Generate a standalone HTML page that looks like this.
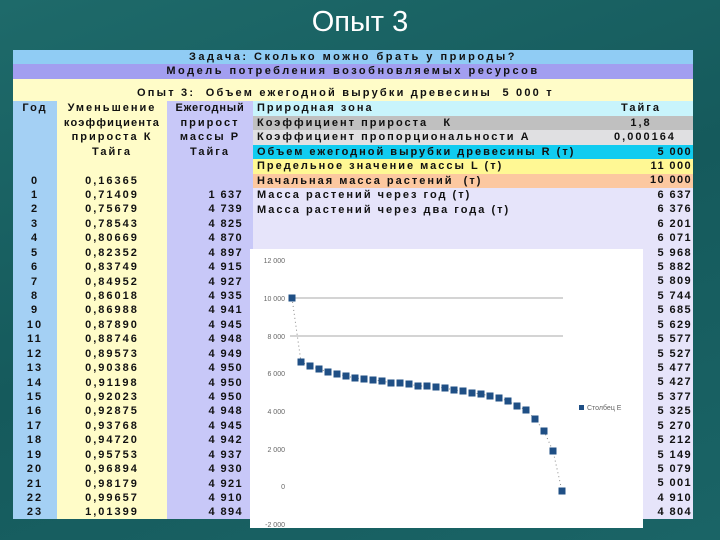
<!DOCTYPE html>
<html><head><meta charset="utf-8"><style>
*{margin:0;padding:0;box-sizing:border-box}
body{width:720px;height:540px;overflow:hidden;position:relative;background:linear-gradient(160deg,#1e6a6a 0%,#155a5c 50%,#1a6466 100%);font-family:"Liberation Sans",sans-serif}
.t{position:absolute;left:0;width:720px;text-align:center;top:6px;color:#fff;font-size:29px}
.b{position:absolute}
.r{position:absolute;height:14.5px;font-size:11px;font-weight:bold;letter-spacing:2px;line-height:14.5px;color:#111;white-space:nowrap}
.c{text-align:center}
.rt{text-align:right;letter-spacing:1.4px}
</style></head><body>
<div class="t">Опыт 3</div>
<div class="b" style="left:13px;top:50px;width:680px;height:14px;background:#90ccf4"></div>
<div class="b" style="left:13px;top:64px;width:680px;height:15px;background:#a29ef0"></div>
<div class="b" style="left:13px;top:79px;width:680px;height:22px;background:#fffcc8"></div>
<div class="b" style="left:13px;top:101px;width:44px;height:418px;background:#a4d0f4"></div>
<div class="b" style="left:57px;top:101px;width:110px;height:418px;background:#fffcc8"></div>
<div class="b" style="left:167px;top:101px;width:86px;height:418px;background:#c8c8f8"></div>
<div class="b" style="left:253px;top:101px;width:440px;height:418px;background:#e6e4fa"></div>
<div class="b" style="left:253px;top:101px;width:440px;height:14.5px;background:#c8f4fc"></div>
<div class="b" style="left:253px;top:115.5px;width:440px;height:14.5px;background:#c0c0c0"></div>
<div class="b" style="left:253px;top:130px;width:440px;height:14.5px;background:#e0e0e2"></div>
<div class="b" style="left:253px;top:144.5px;width:440px;height:14.5px;background:#10ccf0"></div>
<div class="b" style="left:253px;top:159px;width:440px;height:14.5px;background:#fff894"></div>
<div class="b" style="left:253px;top:173.5px;width:440px;height:14.5px;background:#fcc8a0"></div>

<div class="r" style="left:13px;width:680px;top:50px;text-align:center;letter-spacing:2.5px">Задача: Сколько можно брать у природы?</div>
<div class="r" style="left:13px;width:680px;top:64px;text-align:center;letter-spacing:2.5px">Модель потребления возобновляемых ресурсов</div>
<div class="r" style="left:137px;top:86px;letter-spacing:2.2px">Опыт 3:&nbsp; Объем ежегодной вырубки древесины&nbsp; 5 000 т</div>

<div class="r c" style="left:13px;width:44px;top:101px">Год</div>
<div class="r c" style="left:57px;width:110px;top:101px">Уменьшение</div>
<div class="r c" style="left:57px;width:110px;top:115.5px;letter-spacing:1.2px">коэффициента</div>
<div class="r c" style="left:57px;width:110px;top:130px">прироста К</div>
<div class="r c" style="left:57px;width:110px;top:144.5px">Тайга</div>
<div class="r c" style="left:167px;width:86px;top:101px;letter-spacing:0.8px">Ежегодный</div>
<div class="r c" style="left:167px;width:86px;top:115.5px">прирост</div>
<div class="r c" style="left:167px;width:86px;top:130px">массы Р</div>
<div class="r c" style="left:167px;width:86px;top:144.5px">Тайга</div>

<div class="r" style="left:257px;top:101px">Природная зона</div>
<div class="r" style="left:257px;top:115.5px">Коэффициент прироста&nbsp;&nbsp; К</div>
<div class="r" style="left:257px;top:130px">Коэффициент пропорциональности А</div>
<div class="r" style="left:257px;top:144.5px">Объем ежегодной вырубки древесины R (т)</div>
<div class="r" style="left:257px;top:159px">Предельное значение массы L (т)</div>
<div class="r" style="left:257px;top:173.5px">Начальная масса растений&nbsp; (т)</div>
<div class="r" style="left:257px;top:188px">Масса растений через год (т)</div>
<div class="r" style="left:257px;top:202.5px">Масса растений через два года (т)</div>

<div class="r c" style="left:608px;width:66px;top:101px">Тайга</div>
<div class="r c" style="left:608px;width:66px;top:115.5px">1,8</div>
<div class="r c" style="left:600px;width:90px;top:130px">0,000164</div>

<div id="rows"></div>
<script>
var k=["0,16365","0,71409","0,75679","0,78543","0,80669","0,82352","0,83749","0,84952","0,86018","0,86988","0,87890","0,88746","0,89573","0,90386","0,91198","0,92023","0,92875","0,93768","0,94720","0,95753","0,96894","0,98179","0,99657","1,01399"];
var p=["","1 637","4 739","4 825","4 870","4 897","4 915","4 927","4 935","4 941","4 945","4 948","4 949","4 950","4 950","4 950","4 948","4 945","4 942","4 937","4 930","4 921","4 910","4 894"];
var m=["5 000","11 000","10 000","6 637","6 376","6 201","6 071","5 968","5 882","5 809","5 744","5 685","5 629","5 577","5 527","5 477","5 427","5 377","5 325","5 270","5 212","5 149","5 079","5 001","4 910","4 804"];
var h="";
for(var i=0;i<24;i++){var y=173.5+i*14.43;
h+='<div class="r c" style="left:13px;width:44px;top:'+y+'px">'+i+'</div>';
h+='<div class="r c" style="left:57px;width:110px;top:'+y+'px">'+k[i]+'</div>';
h+='<div class="r rt" style="left:167px;width:76px;top:'+y+'px">'+p[i]+'</div>';}
for(var j=0;j<m.length;j++){var y=144.5+j*14.43;
h+='<div class="r rt" style="left:600px;width:92px;top:'+y+'px">'+m[j]+'</div>';}
document.getElementById("rows").innerHTML=h;
</script>

<svg class="b" style="left:250px;top:249px" width="393" height="279" viewBox="0 0 393 279">
<rect width="393" height="279" fill="#fff"/>
<line x1="40" y1="49" x2="313" y2="49" stroke="#aaa"/>
<line x1="40" y1="87" x2="313" y2="87" stroke="#aaa"/>
<g font-family="Liberation Sans" font-size="7" fill="#666" text-anchor="end">
<text x="35" y="14">12 000</text><text x="35" y="52">10 000</text><text x="35" y="90">8 000</text><text x="35" y="127">6 000</text><text x="35" y="165">4 000</text><text x="35" y="203">2 000</text><text x="35" y="240">0</text><text x="35" y="278">-2 000</text>
</g>
<polyline fill="none" stroke="#888" stroke-dasharray="1,3" points="42,49 51,113 60,117 69,120 78,123 87,125 96,127 105,129 114,130 123,131 132,132 141,134 150,134 159,135 168,137 177,137 186,138 195,139 204,141 213,142 222,144 231,145 240,147 249,149 258,152 267,157 276,161 285,170 294,182 303,202 312,242"/>
<g fill="#1f4f85" id="pts"></g>
<rect x="329" y="156" width="5" height="5" fill="#1f4f85"/>
<text x="337" y="161" font-family="Liberation Sans" font-size="7" fill="#666">Столбец E</text>
</svg>
<script>
var ys=[49,113,117,120,123,125,127,129,130,131,132,134,134,135,137,137,138,139,141,142,144,145,147,149,152,157,161,170,182,202,242];
var s="";for(var i=0;i<ys.length;i++){s+='<rect x="'+(38.5+9*i)+'" y="'+(ys[i]-3.5)+'" width="7" height="7"/>';}
document.getElementById("pts").innerHTML=s;
</script>
</body></html>
